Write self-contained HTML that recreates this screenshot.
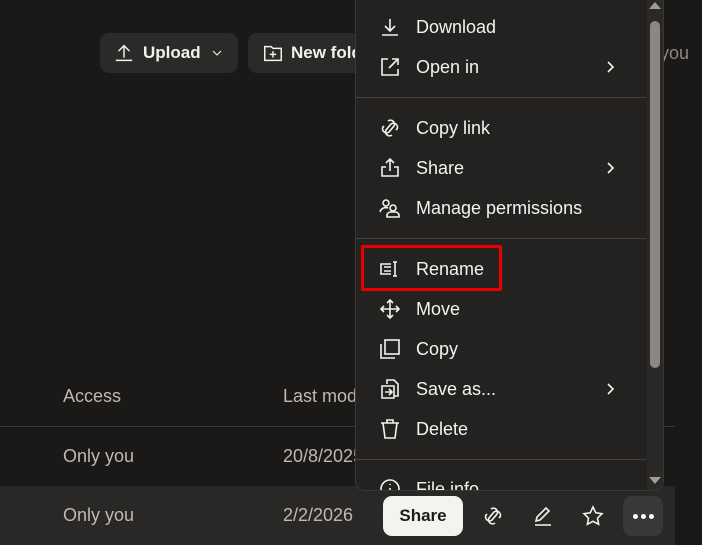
<!DOCTYPE html>
<html><head><style>
*{margin:0;padding:0;box-sizing:border-box}
body{width:702px;height:545px;overflow:hidden;background:#1a1918;font-family:"Liberation Sans",sans-serif;position:relative;color:#e8e6e3}
.a{position:absolute}
.btn{background:#2b2a28;border-radius:9px;height:40px;top:33px;color:#f3f1ee;font-weight:bold;font-size:17px;display:flex;align-items:center;white-space:nowrap;overflow:hidden}
.t{font-size:18px;color:#bdb9b4;white-space:nowrap}
.menu{left:355px;top:-10px;width:309px;height:501px;background:#242221;border:1px solid #3a3836;border-radius:0 0 10px 10px;overflow:hidden}
.it{position:absolute;left:0;width:290px;height:40px;display:flex;align-items:center;font-size:18px;color:#f4f2ef}
.it svg{position:absolute;left:22px;width:24px;height:24px}
.it span{position:absolute;left:60px;white-space:nowrap}
.it svg.chev{left:246px;width:16px;height:16px}
.sep{position:absolute;left:0;width:290px;height:1px;background:#45423f}
svg path,svg rect,svg circle,svg polyline{fill:none;stroke:#f4f2ef;stroke-width:1.6}
</style></head><body>
<div class="a btn" style="left:100px;width:138px"><svg width="22" height="22" style="margin-left:13px" viewBox="0 0 24 24"><path d="M12 17V4M6 10l6-6 6 6M3 20h18"/></svg><span style="margin-left:8px">Upload</span><svg width="16" height="16" style="margin-left:8px" viewBox="0 0 24 24"><path d="M6 9l6 6 6-6"/></svg></div>
<div class="a btn" style="left:248px;width:130px"><svg width="24" height="22" style="margin-left:13px" viewBox="0 0 24 24"><path d="M3 5h7l2 2h9v13H3zM12 10v7M8.5 13.5h7"/></svg><span style="margin-left:6px">New folder</span></div>
<div class="a t" style="left:660px;top:43px;color:#8d8984">you</div>
<div class="a t" style="left:63px;top:386px">Access</div>
<div class="a t" style="left:283px;top:386px">Last modified</div>
<div class="a" style="left:0;top:426px;width:675px;height:1px;background:#3a3836"></div>
<div class="a t" style="left:63px;top:446px">Only you</div>
<div class="a t" style="left:283px;top:446px">20/8/2025</div>
<div class="a" style="left:0;top:486px;width:675px;height:59px;background:#2a2827"></div>
<div class="a t" style="left:63px;top:505px">Only you</div>
<div class="a t" style="left:283px;top:505px">2/2/2026</div>
<div class="a" style="left:383px;top:496px;width:80px;height:40px;background:#f5f3ef;border-radius:9px;color:#1d1b1a;font-size:17px;font-weight:bold;display:flex;align-items:center;justify-content:center">Share</div>
<svg class="a" style="left:481px;top:504px" width="24" height="24" viewBox="0 0 24 24"><path d="M10 5a4 4 0 0 1 6 5l-5 6a4 4 0 0 1-6-5l1-1M14 19a4 4 0 0 1-6-5l5-6a4 4 0 0 1 6 5l-1 1"/></svg>
<svg class="a" style="left:531px;top:504px" width="24" height="24" viewBox="0 0 24 24"><path d="M5 17l1-4 9-9 3 3-9 9zM4 21h16"/></svg>
<svg class="a" style="left:581px;top:504px" width="24" height="24" viewBox="0 0 24 24"><path d="M12 3l2.8 5.8 6.2.9-4.5 4.4 1.1 6.2L12 17.3 6.4 20.3l1.1-6.2L3 9.7l6.2-.9z"/></svg>
<div class="a" style="left:623px;top:496px;width:40px;height:40px;background:#3a3836;border-radius:9px;display:flex;align-items:center;justify-content:center;gap:3px"><i style="width:5px;height:5px;border-radius:50%;background:#fff"></i><i style="width:5px;height:5px;border-radius:50%;background:#fff"></i><i style="width:5px;height:5px;border-radius:50%;background:#fff"></i></div>
<div class="a menu">
 <div class="it" style="top:16px"><svg viewBox="0 0 24 24"><path d="M12 4v12M7 11l5 5 5-5M4 20h16"/></svg><span>Download</span></div>
 <div class="it" style="top:56px"><svg viewBox="0 0 24 24"><path d="M10 4H4v16h16v-6M14 4h6v6M20 4l-9 9"/></svg><span>Open in</span><svg class="chev" viewBox="0 0 16 16"><path d="M6 3l5 5-5 5"/></svg></div>
 <div class="sep" style="top:106px"></div>
 <div class="it" style="top:117px"><svg viewBox="0 0 24 24"><path d="M10 5a4 4 0 0 1 6 5l-5 6a4 4 0 0 1-6-5l1-1M14 19a4 4 0 0 1-6-5l5-6a4 4 0 0 1 6 5l-1 1"/></svg><span>Copy link</span></div>
 <div class="it" style="top:157px"><svg viewBox="0 0 24 24"><path d="M12 3v12M8 7l4-4 4 4M8 11H4v9h16v-9h-4"/></svg><span>Share</span><svg class="chev" viewBox="0 0 16 16"><path d="M6 3l5 5-5 5"/></svg></div>
 <div class="it" style="top:197px"><svg viewBox="0 0 24 24"><circle cx="8" cy="7" r="3"/><path d="M2 16a6 6 0 0 1 8-4"/><circle cx="15" cy="12" r="3"/><path d="M9 21v-2a4 4 0 0 1 4-3h4a4 4 0 0 1 4 3v2z"/></svg><span>Manage permissions</span></div>
 <div class="sep" style="top:247px"></div>
 <div class="it" style="top:258px"><svg viewBox="0 0 24 24"><path d="M13 7H3v10h10M6 10h7M6 14h7M15 5h4M15 19h4M17 5v14"/></svg><span>Rename</span></div>
 <div class="it" style="top:298px"><svg viewBox="0 0 24 24"><path d="M12 3v18M3 12h18M9 6l3-3 3 3M9 18l3 3 3-3M6 9l-3 3 3 3M18 9l3 3-3 3"/></svg><span>Move</span></div>
 <div class="it" style="top:338px"><svg viewBox="0 0 24 24"><rect x="7" y="3" width="14" height="14"/><path d="M3 7v14h14"/></svg><span>Copy</span></div>
 <div class="it" style="top:378px"><svg viewBox="0 0 24 24"><path d="M9 7V3h7l4 4v12h-4M4 9h12v12H4zM7 15h6M11 12l3 3-3 3"/></svg><span>Save as...</span><svg class="chev" viewBox="0 0 16 16"><path d="M6 3l5 5-5 5"/></svg></div>
 <div class="it" style="top:418px"><svg viewBox="0 0 24 24"><path d="M3 6h18M9 6V3h6v3M5 6l2 15h10l2-15"/></svg><span>Delete</span></div>
 <div class="sep" style="top:468px"></div>
 <div class="it" style="top:478px"><svg viewBox="0 0 24 24"><circle cx="12" cy="12" r="9"/><path d="M12 11v6M12 7v1"/></svg><span>File info</span></div>
 <div style="position:absolute;left:291px;top:0;width:17px;height:501px;background:#2b2927"></div>
 <div style="position:absolute;left:294px;top:30px;width:10px;height:347px;background:#8a8784;border-radius:5px"></div>
 <div style="position:absolute;left:293px;top:11px;width:0;height:0;border-left:6px solid transparent;border-right:6px solid transparent;border-bottom:7px solid #a09d99"></div>
 <div style="position:absolute;left:293px;top:486px;width:0;height:0;border-left:6px solid transparent;border-right:6px solid transparent;border-top:7px solid #a09d99"></div>
</div>
<div class="a" style="left:361px;top:245px;width:141px;height:46px;border:3px solid #e60000;border-radius:2px"></div>
</body></html>
